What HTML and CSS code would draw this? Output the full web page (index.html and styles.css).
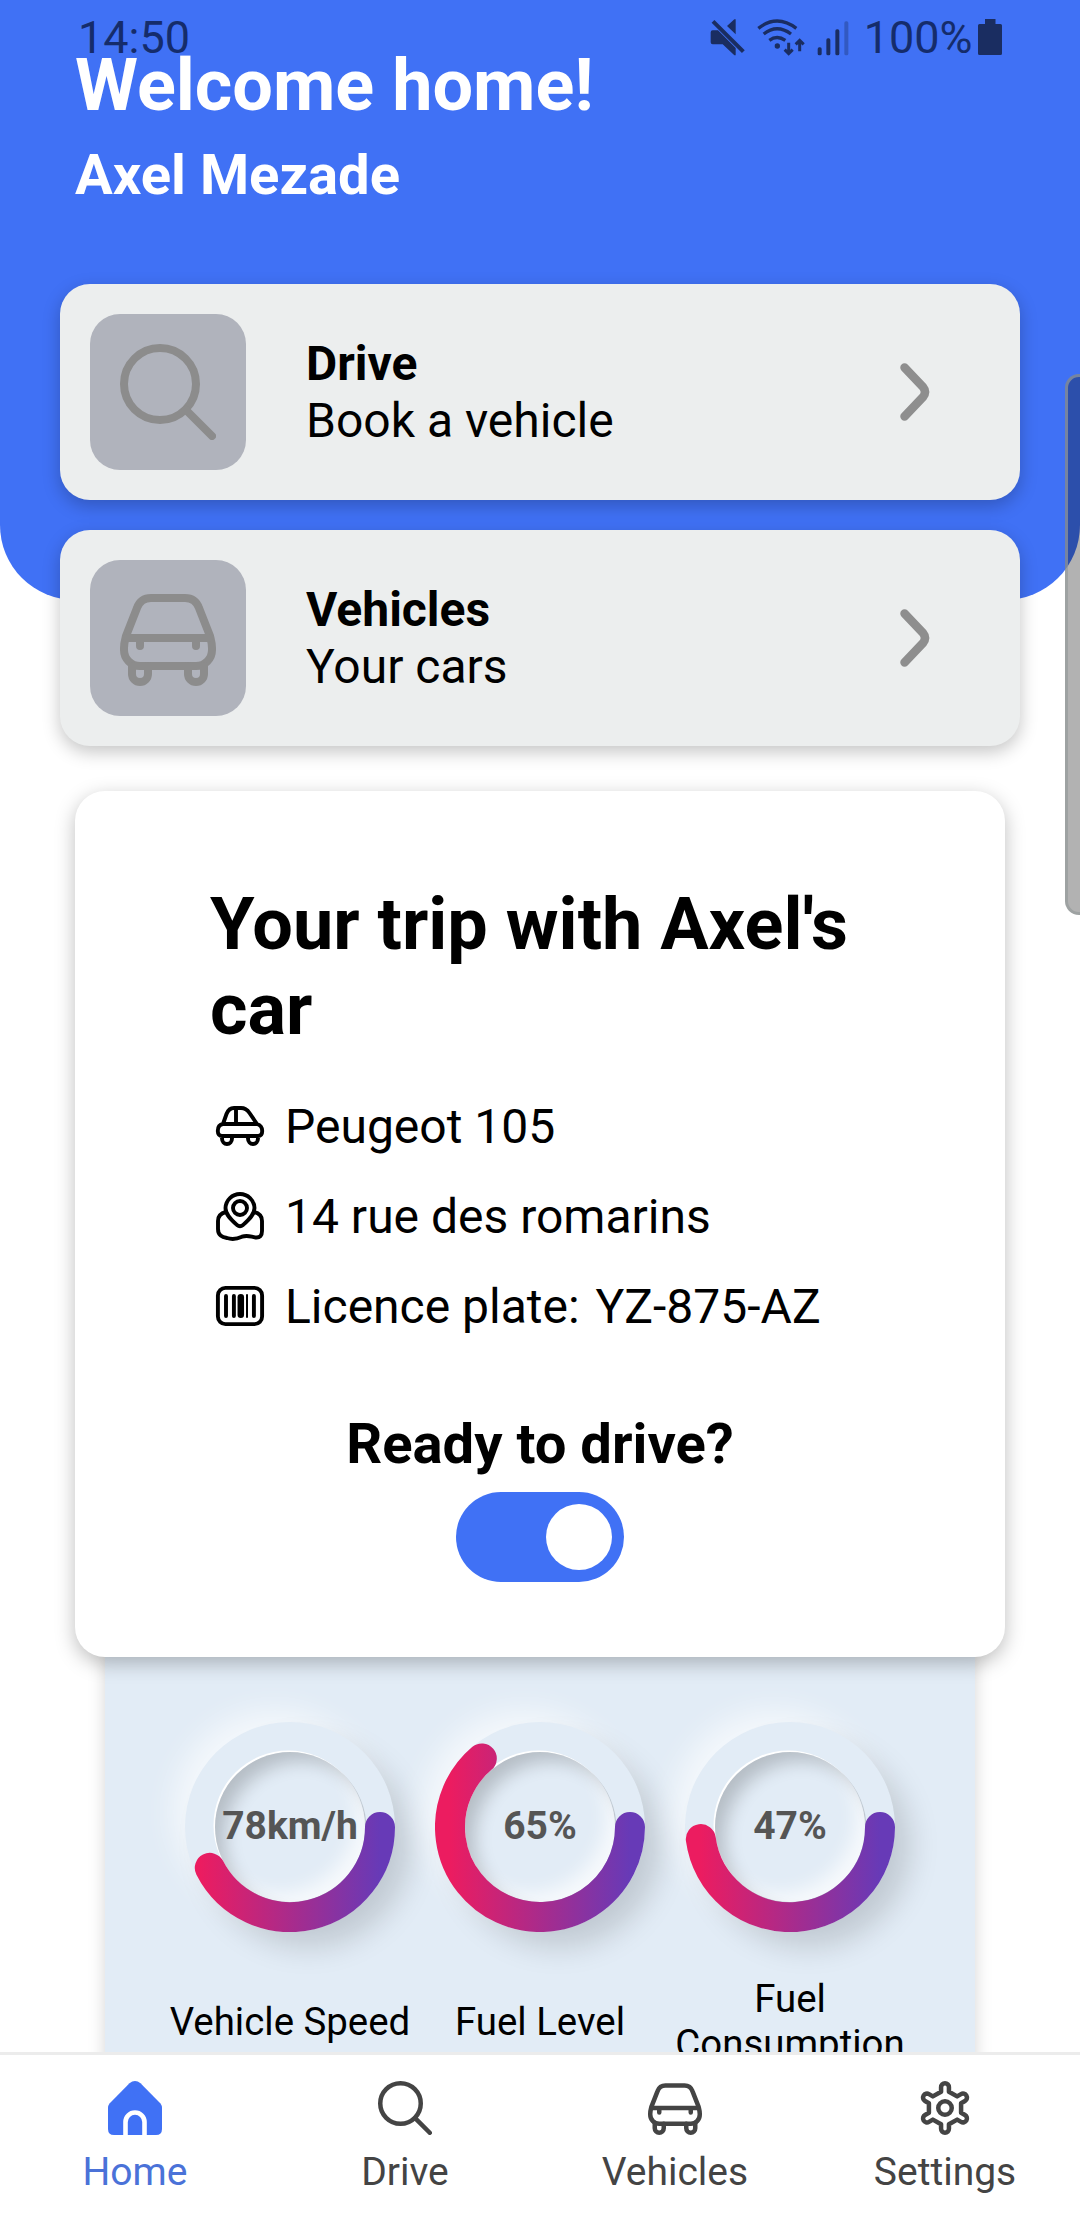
FILE: index.html
```html
<!DOCTYPE html>
<html lang="en">
<head>
<meta charset="utf-8">
<title>Home</title>
<link rel="stylesheet" href="styles.css">
</head>
<body>
<svg class="defs" aria-hidden="true">
  <defs>
    <linearGradient id="ring" gradientUnits="userSpaceOnUse" x1="15" y1="0" x2="195" y2="0">
      <stop offset="0" stop-color="#ec1c60"/>
      <stop offset="1" stop-color="#673ab7"/>
    </linearGradient>
    <symbol id="i-search" viewBox="0 0 96 96">
      <circle cx="40" cy="40" r="36"/>
      <path d="M66 66 92 92"/>
    </symbol>
    <symbol id="i-car" viewBox="0 0 96 96">
      <path d="M4 58C4 53 5 50 6 46L17 18C19.500 11 24 8 31 8H65C72 8 76.500 11 79 18L90 46C91 50 92 53 92 58V60A16 16 0 0 1 76 76H20A16 16 0 0 1 4 60Z"/>
      <path d="M7 48H89M20 48V56M76 48V56M12 76V84A8 8 0 0 0 28 84V76M68 76V84A8 8 0 0 0 84 84V76"/>
    </symbol>
    <symbol id="i-gear" viewBox="-48 -48 96 96">
      <circle r="12"/>
      <path d="M-7-29V-37A7 7 0 0 1 7-37V-29L21.600-20.600 28.500-24.600A7 7 0 0 1 35.500-12.400L28.600-8.400V8.400L35.500 12.400A7 7 0 0 1 28.500 24.600L21.600 20.600 7 29V37A7 7 0 0 1-7 37V29L-21.600 20.600-28.500 24.600A7 7 0 0 1-35.500 12.400L-28.600 8.400V-8.400L-35.500-12.400A7 7 0 0 1-28.500-24.600L-21.600-20.600Z"/>
    </symbol>
  </defs>
</svg>

<main class="screen">
  <header class="hero">
    <h1 class="hero-title">Welcome home!</h1>
    <h2 class="hero-name">Axel Mezade</h2>
  </header>

  <section class="links">
    <a class="link-card">
      <span class="link-icon"><svg class="line-icon"><use href="#i-search"/></svg></span>
      <span class="link-text"><b>Drive</b><span>Book a vehicle</span></span>
      <svg class="chevron" viewBox="0 0 30 58"><path d="M4.500 4.500 23 24Q27 29 23 34L4.500 53.500"/></svg>
    </a>
    <a class="link-card">
      <span class="link-icon"><svg class="line-icon"><use href="#i-car"/></svg></span>
      <span class="link-text"><b>Vehicles</b><span>Your cars</span></span>
      <svg class="chevron" viewBox="0 0 30 58"><path d="M4.500 4.500 23 24Q27 29 23 34L4.500 53.500"/></svg>
    </a>
  </section>

  <section class="trip">
    <h1 class="trip-title">Your trip with Axel's car</h1>
    <ul class="trip-list">
      <li>
        <svg class="trip-icon" viewBox="0 0 60 60">
          <path d="M13 28 16.500 18C18 14 20 12 24 12H31C35 12 37.500 14 39.500 17L47 28C50.500 29 52.200 32 52.200 35C52.200 38 51 40 48 40H12C9.500 40 7.800 38 7.800 35C7.800 31 9.500 28.500 13 28ZM13 28H47M26 12V28M12 40V42.500A5 5.500 0 0 0 22 42.500V40M38 40V42.500A5 5.500 0 0 0 48 42.500V40"/>
        </svg>
        <span class="trip-text">Peugeot 105</span>
      </li>
      <li>
        <svg class="trip-icon" viewBox="0 0 60 60">
          <circle cx="30" cy="22" r="7"/>
          <path d="M30 8A14.500 14.500 0 0 1 44.500 22C44.500 29 38 34.500 33 39Q30 41.500 27 39C22 34.500 15.500 29 15.500 22A14.500 14.500 0 0 1 30 8Z"/>
          <path d="M16 26C10 27.500 8 30.500 8 35V43C8 49.500 12 51 17 52C23 54 27 53 32 50.700C38 48.500 41 51 45.500 51.500C50 52 52 49.500 52 45V35C52 30.500 50 27.500 44 26"/>
        </svg>
        <span class="trip-text">14 rue des romarins</span>
      </li>
      <li>
        <svg class="trip-icon" viewBox="0 0 60 60">
          <rect x="7.900" y="11.900" width="44.200" height="36.200" rx="7.500"/>
          <path d="M16 20V40M23.900 20V40M43.900 20V40"/>
          <path class="bar-wide" d="M30.800 21.200V38.800"/>
          <path class="bar-thin" d="M37 19V41"/>
        </svg>
        <span class="trip-text">Licence plate: <span class="plate">YZ-875-AZ</span></span>
      </li>
    </ul>
    <div class="ready">
      <h3 class="ready-title">Ready to drive?</h3>
      <div class="toggle"><span class="knob"></span></div>
    </div>
  </section>

  <section class="stats">
    <div class="stat">
      <div class="dial"><div class="dial-inner">78km/h</div>
        <svg class="dial-arc" viewBox="0 0 210 210"><path d="M195 105A90 90 0 0 1 24.800 145.900"/></svg></div>
      <p class="stat-label">Vehicle Speed</p>
    </div>
    <div class="stat">
      <div class="dial"><div class="dial-inner">65%</div>
        <svg class="dial-arc" viewBox="0 0 210 210"><path d="M195 105A90 90 0 1 1 46.800 36.400"/></svg></div>
      <p class="stat-label">Fuel Level</p>
    </div>
    <div class="stat">
      <div class="dial"><div class="dial-inner">47%</div>
        <svg class="dial-arc" viewBox="0 0 210 210"><path d="M195 105A90 90 0 0 1 15.800 117.100"/></svg></div>
      <p class="stat-label">Fuel Consumption</p>
    </div>
  </section>
</main>

<nav class="tabs">
  <a class="tab active">
    <svg class="tab-icon" viewBox="0 0 54 54">
      <path class="house" d="M21.500 2.200Q27-2.200 32.500 2.200L52.500 22.500Q54 24.500 54 27V48Q54 54 48 54H6Q0 54 0 48V27Q0 24.500 1.500 22.500Z"/>
      <path class="door" d="M17.500 54V41A9.500 9.500 0 0 1 36.500 41V54"/>
    </svg>
    <span>Home</span>
  </a>
  <a class="tab"><svg class="tab-icon line-icon"><use href="#i-search"/></svg><span>Drive</span></a>
  <a class="tab"><svg class="tab-icon line-icon"><use href="#i-car"/></svg><span>Vehicles</span></a>
  <a class="tab"><svg class="tab-icon line-icon"><use href="#i-gear"/></svg><span>Settings</span></a>
</nav>

<div class="status">
  <span class="clock">14:50</span>
  <svg class="st-mute" viewBox="205 50 110 120">
    <path class="solid" d="M216 90H232L285 143V165H281L246 132H216Q210 132 210 126V96Q210 90 216 90ZM281 57H285V102L259 77Z"/>
    <path d="M217 63 308 154" stroke-width="12"/>
  </svg>
  <svg class="st-wifi" viewBox="345 50 155 120">
    <path d="M355 84Q411 40 469 84M371 101Q411 70 453 101M388 120Q411 103 436 120" stroke-width="10"/>
    <circle class="solid" cx="412" cy="137" r="8"/>
    <path d="M446 127V158M434 148 446 160 458 148M479 153V122M467 132 479 120 491 132" stroke-width="9"/>
  </svg>
  <svg class="st-signal" viewBox="525 50 110 120">
    <rect class="solid" x="533" y="141" width="12" height="24" rx="5"/>
    <rect class="solid" x="559" y="114" width="12" height="51" rx="5"/>
    <rect class="solid" x="586" y="87" width="12" height="78" rx="5"/>
    <rect class="solid faint" x="613" y="63" width="12" height="102" rx="5"/>
  </svg>
  <span class="percent">100%</span>
  <svg class="st-battery" viewBox="0 0 24 40">
    <path class="solid" d="M7 2H17.500V7H22.500Q24 7 24 8.500V36.500Q24 38 22.500 38H1.500Q0 38 0 36.500V8.500Q0 7 1.500 7H7Z"/>
  </svg>
</div>
<div class="edge-handle"></div>
</body>
</html>
```

FILE: styles.css
```css
* { box-sizing: border-box; margin: 0; padding: 0; }
body {
  position: relative;
  display: flex;
  flex-direction: column;
  width: 1080px;
  height: 2220px;
  overflow: hidden;
  background: #fff;
  color: #000;
  font-family: Roboto, "Liberation Sans", sans-serif;
  font-size: 48px;
  line-height: 1.172;
}
svg { display: block; flex: none; fill: none; stroke-linecap: round; stroke-linejoin: round; }
.defs { position: absolute; width: 0; height: 0; }
.line-icon { stroke: currentColor; stroke-width: 8px; }

.screen { height: 2052px; overflow: hidden; }

.hero {
  height: 600px;
  padding: 44px 75px 0;
  border-radius: 0 0 75px 75px;
  background: #4071f5;
  color: #fff;
}
.hero-title { font-size: 72px; }
.hero-name { margin-top: 15px; font-size: 56.160px; }

.links { display: flex; flex-direction: column; gap: 30px; margin: -316px 60px 0; }
.link-card {
  display: flex;
  align-items: center;
  height: 216px;
  padding: 30px 90px 30px 30px;
  border-radius: 30px;
  background: #eceeee;
  box-shadow: 0 6px 18px rgba(0, 0, 0, .23);
}
.link-icon {
  display: grid;
  place-items: center;
  width: 156px;
  height: 156px;
  border-radius: 30px;
  background: #b0b3bc;
  color: #8c8c8c;
}
.link-icon svg { width: 96px; height: 96px; }
.link-text { display: flex; flex-direction: column; flex: 1; gap: 1px; margin-left: 60px; padding-top: 1px; }
.chevron { width: 30px; height: 58px; stroke: #8e8e8e; stroke-width: 8.500px; }

.trip {
  position: relative;
  z-index: 1;
  height: 866px;
  margin: 45px 75px 0;
  padding: 91px 135px 0;
  border-radius: 30px;
  background: #fff;
  box-shadow: 0 6px 20px rgba(0, 0, 0, .26);
}
.trip-title { font-size: 72px; line-height: 85px; }
.trip-list { display: flex; flex-direction: column; gap: 30px; margin-top: 44px; list-style: none; }
.trip-list li { display: flex; align-items: center; gap: 15px; height: 60px; white-space: nowrap; }
.trip-text { padding-top: 2px; }
.plate { margin-left: 4px; }
.trip-icon { width: 60px; height: 60px; stroke: #000; stroke-width: 3.900px; }
.bar-wide { stroke-width: 6.500px; }
.bar-thin { stroke-width: 2px; }
.ready { display: flex; flex-direction: column; align-items: center; margin-top: 76px; }
.ready-title { font-size: 56.160px; }
.toggle {
  display: flex;
  justify-content: flex-end;
  width: 168px;
  height: 90px;
  margin-top: 14px;
  padding: 12px;
  border-radius: 45px;
  background: #4071f5;
}
.knob { width: 66px; height: 66px; border-radius: 50%; background: #fff; }

.stats {
  display: grid;
  grid-template-columns: repeat(3, 250px);
  height: 480px;
  margin: -15px 105px 0;
  padding: 80px 60px 0;
  background: #e2ecf6;
  box-shadow: 0 6px 16px rgba(0, 0, 0, .17);
}
.stat { display: flex; flex-direction: column; align-items: center; }
.dial {
  position: relative;
  width: 210px;
  height: 210px;
  padding: 30px;
  border-radius: 50%;
  box-shadow: 18px 18px 30px -3px rgba(0, 0, 0, .15), -15px -15px 30px -3px rgba(255, 255, 255, .62);
}
.dial-inner {
  display: grid;
  place-items: center;
  width: 150px;
  height: 150px;
  padding-bottom: 1px;
  border-radius: 50%;
  color: #555;
  font-size: 39px;
  font-weight: 700;
  box-shadow:
    inset 12px 12px 18px -3px rgba(0, 0, 0, .2),
    inset -12px -12px 18px -3px rgba(255, 255, 255, .7),
    -1.500px -1.500px 0 #fff,
    1.500px 1.500px 0 rgba(0, 0, 0, .15),
    0 36px 30px -30px rgba(0, 0, 0, .05);
}
.dial-arc { position: absolute; inset: 0; width: 210px; height: 210px; stroke: url(#ring); stroke-width: 30px; }
.stat-label {
  display: flex;
  align-items: center;
  justify-content: center;
  height: 90px;
  margin-top: 44px;
  font-size: 38.400px;
  text-align: center;
}

.tabs {
  display: grid;
  grid-template-columns: repeat(4, 1fr);
  height: 168px;
  border-top: 3px solid #ececec;
  background: #fff;
}
.tab {
  display: flex;
  flex-direction: column;
  align-items: center;
  gap: 15px;
  padding-top: 26px;
  color: #444;
  font-size: 39px;
}
.tab.active { color: #4a72d8; }
.tab-icon { width: 54px; height: 54px; }
.house { fill: #4071f5; }
.door { stroke: #fff; stroke-width: 4.600px; stroke-linecap: butt; }

.status {
  position: absolute;
  top: 0;
  left: 0;
  display: flex;
  align-items: center;
  width: 1080px;
  height: 76px;
  padding: 0 78px;
  color: #152c6b;
  font-size: 45px;
}
.status svg { margin-bottom: 2px; stroke: #1a2d61; stroke-linecap: butt; stroke-linejoin: miter; }
.status .solid { fill: #1a2d61; stroke: none; }
.status .faint { opacity: .35; }
.clock { flex: 1; }
.st-mute { width: 36.700px; height: 40px; margin-right: 10px; }
.st-wifi { width: 51.700px; height: 40px; margin-right: 8px; }
.st-signal { width: 36.700px; height: 40px; margin-right: 12px; }
.st-battery { width: 24px; height: 40px; margin-left: 5.500px; }

.edge-handle {
  position: absolute;
  top: 374px;
  right: -3px;
  width: 18px;
  height: 541px;
  border: 3px solid rgba(150, 155, 155, .7);
  border-radius: 14px 0 0 14px;
  background: rgba(0, 0, 0, .3);
}
```
